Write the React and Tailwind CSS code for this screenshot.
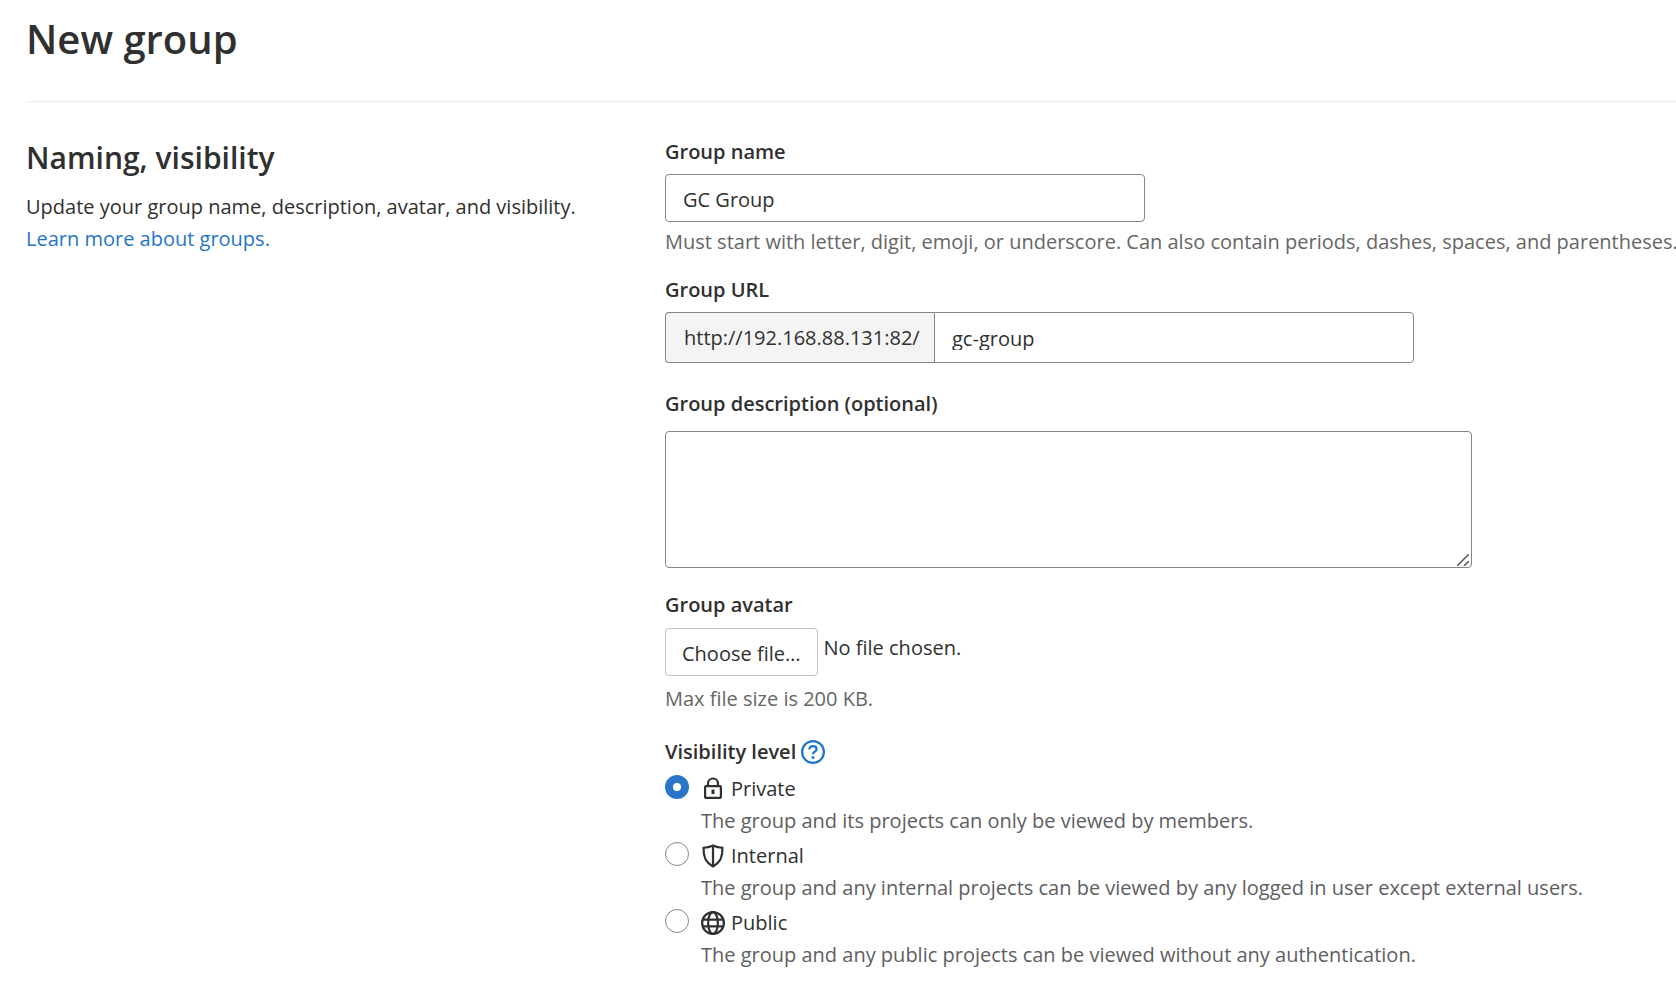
import React, { useState } from 'react';

const VISIBILITY_LEVELS = [
  {
    value: 'private',
    title: 'Private',
    text: 'The group and its projects can only be viewed by members.',
    Icon: LockIcon,
  },
  {
    value: 'internal',
    title: 'Internal',
    text: 'The group and any internal projects can be viewed by any logged in user except external users.',
    Icon: ShieldIcon,
  },
  {
    value: 'public',
    title: 'Public',
    text: 'The group and any public projects can be viewed without any authentication.',
    Icon: EarthIcon,
  },
];

function LockIcon() {
  return (
    <svg className="size-6 shrink-0" viewBox="0 0 24 24" fill="none" stroke="currentColor" strokeWidth="2.2" aria-hidden="true">
      <rect x="4.1" y="9.1" width="15.8" height="11.8" rx="0.8" />
      <path d="M7 9V6.5a5 5 0 0 1 10 0V9" />
      <path d="M12 12.5v4.5" strokeWidth="3" />
    </svg>
  );
}

function ShieldIcon() {
  return (
    <svg className="size-6 shrink-0" viewBox="0 0 16 16" fill="none" stroke="currentColor" strokeWidth="1.5" aria-hidden="true">
      <path d="M8 1C10 1.9 12 2.4 14.25 2.5 14.6 8 13.4 12 8 15 2.6 12 1.4 8 1.75 2.5 4 2.4 6 1.9 8 1Z" />
      <path d="M8 1v14" />
    </svg>
  );
}

function EarthIcon() {
  return (
    <svg className="size-6 shrink-0" viewBox="0 0 16 16" fill="none" stroke="currentColor" strokeWidth="1.5" aria-hidden="true">
      <circle cx="8" cy="8" r="7.25" />
      <ellipse cx="8" cy="8" rx="3.25" ry="7.25" />
      <path d="M1.5 5.75h13M1.5 10.25h13" />
    </svg>
  );
}

function QuestionIcon() {
  return (
    <svg className="size-6" viewBox="0 0 16 16" fill="none" stroke="currentColor" strokeWidth="1.5" aria-hidden="true">
      <circle cx="8" cy="8" r="7.25" />
      <path d="M5.6 6.3C5.7 4.7 6.7 4 8 4c1.4 0 2.4.9 2.4 2.1C10.4 7.7 8 7.7 8 9.5" />
      <circle cx="8" cy="11.7" r="1" fill="currentColor" stroke="none" />
    </svg>
  );
}

const labelClass = 'block font-semibold leading-[30px] text-[#303030]';

export default function App() {
  const [name, setName] = useState('GC Group');
  const [path, setPath] = useState('gc-group');
  const [visibility, setVisibility] = useState('private');

  return (
    <div className="min-h-screen bg-white pl-[26px] font-['Open_Sans','Noto_Sans',sans-serif] text-[20px] leading-8 text-[#303030]">
      <header className="border-b border-[#ececec] pt-[11px] pb-[34px]">
        <h1 className="text-[40px] leading-[56px] font-semibold">New group</h1>
      </header>

      <form className="grid grid-cols-[minmax(0,639fr)_minmax(0,1011fr)] pt-[35px]">
        <section className="pr-8">
          <h2 className="text-[30px] leading-[42px] font-semibold">Naming, visibility</h2>
          <p className="mt-3">
            Update your group name, description, avatar, and visibility.
            <br />
            <a href="#groups" className="text-[#1f75cb]">Learn more about groups.</a>
          </p>
        </section>

        <section>
          <label htmlFor="group_name" className={labelClass}>Group name</label>
          <input
            id="group_name"
            type="text"
            value={name}
            onChange={(e) => setName(e.target.value)}
            className="mt-[7px] block h-12 w-[480px] max-w-full rounded border border-[#868686] px-[17px] pt-[2px] leading-[22px]"
          />
          <p className="mt-1 text-[#666] xl:whitespace-nowrap">
            Must start with letter, digit, emoji, or underscore. Can also contain periods, dashes, spaces, and parentheses.
          </p>

          <label htmlFor="group_path" className={`${labelClass} mt-[17px]`}>Group URL</label>
          <div className="mt-[7px] flex h-[51px] w-[749px] max-w-full">
            <span className="flex w-[269px] items-center rounded-l border border-r-0 border-[#868686] bg-[#f4f4f4] pl-[18px]">
              http://192.168.88.131:82/
            </span>
            <input
              id="group_path"
              type="text"
              value={path}
              onChange={(e) => setPath(e.target.value)}
              className="min-w-0 flex-1 rounded-r border border-[#868686] px-[17px] pt-[2px] leading-[22px]"
            />
          </div>

          <label htmlFor="group_description" className={`${labelClass} mt-[26px]`}>Group description (optional)</label>
          <div className="relative mt-3 w-fit max-w-full">
            <textarea
              id="group_description"
              className="block h-[137px] w-[807px] max-w-full resize rounded border border-[#868686] px-4 py-2 [&::-webkit-resizer]:bg-transparent"
            />
            {/* resize grip */}
            <svg className="pointer-events-none absolute right-[3px] bottom-[2px] size-3" viewBox="0 0 12 12" fill="none" stroke="#555" strokeWidth="1.5" aria-hidden="true">
              <path d="M0 12 12 0M7 12l5-5" />
            </svg>
          </div>

          <span id="avatar_label" className={`${labelClass} mt-[22px]`}>Group avatar</span>
          <div className="mt-2 flex gap-[6px]">
            <button
              type="button"
              aria-describedby="avatar_label"
              className="h-12 rounded border border-[#bfbfbf] px-4 pt-1"
            >
              Choose file…
            </button>
            <span className="mt-1">No file chosen.</span>
          </div>
          <p className="mt-[7px] text-[#666]">Max file size is 200 KB.</p>

          <fieldset className="mt-[22px]">
            <legend className="flex items-center gap-[5px] font-semibold leading-[30px]">
              Visibility level
              <a href="#visibility" aria-label="Help" className="text-[#1f75cb]">
                <QuestionIcon />
              </a>
            </legend>
            <div className="mt-[6px] flex flex-col gap-[3px]">
              {VISIBILITY_LEVELS.map(({ value, title, text, Icon }) => (
                <div key={value} className="flex gap-3">
                  <input
                    id={`visibility_${value}`}
                    type="radio"
                    name="visibility"
                    checked={visibility === value}
                    onChange={() => setVisibility(value)}
                    className="mt-[2px] size-6 shrink-0 appearance-none rounded-full border border-[#868686] bg-white checked:border-8 checked:border-[#2b75c9]"
                  />
                  <div>
                    <label htmlFor={`visibility_${value}`} className="flex items-center gap-[6px]">
                      <Icon />
                      {title}
                    </label>
                    <p className="text-[#5e5e63]">{text}</p>
                  </div>
                </div>
              ))}
            </div>
          </fieldset>
        </section>
      </form>
    </div>
  );
}
